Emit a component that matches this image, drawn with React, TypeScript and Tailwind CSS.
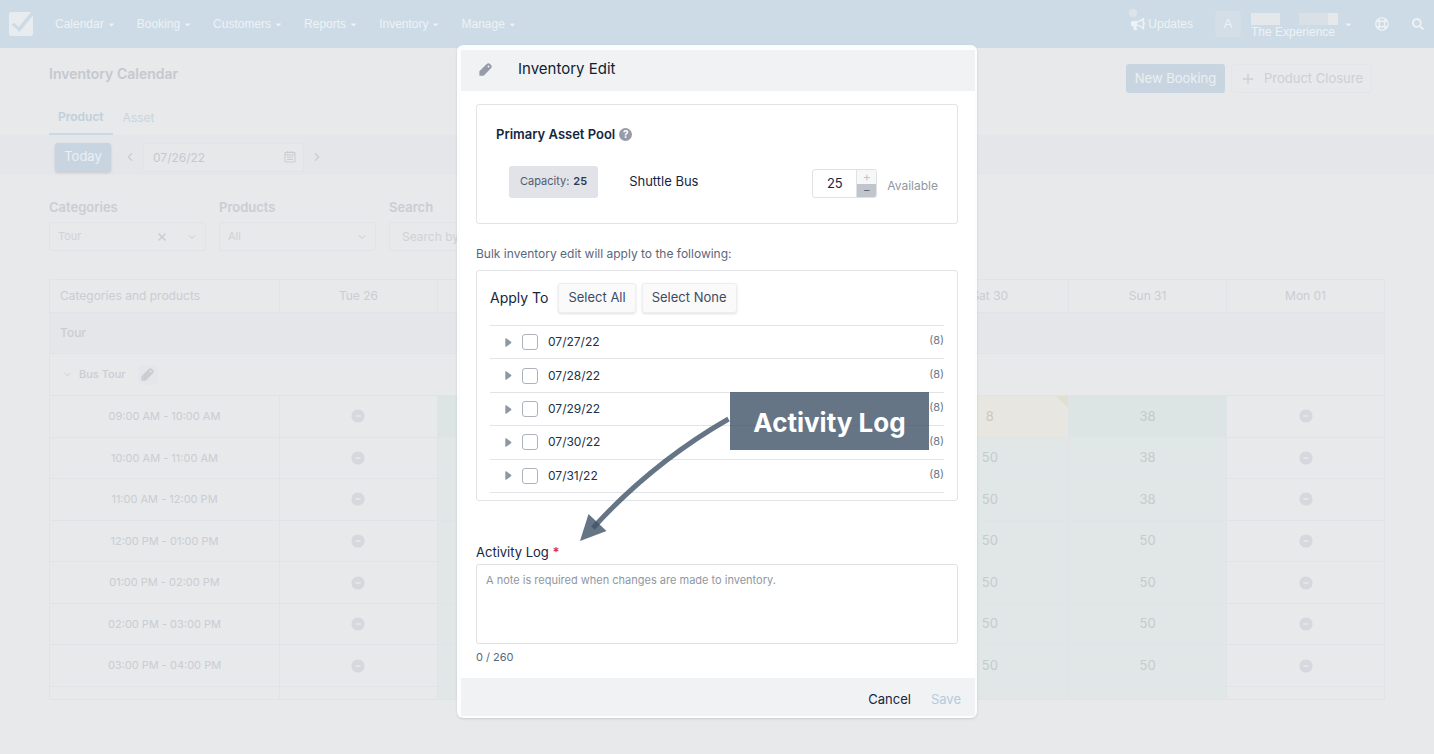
import { ReactNode, SVGProps } from 'react'
import { ChevronDown, ChevronLeft, ChevronRight, Plus, X } from 'lucide-react'
import { FaBullhorn, FaCaretDown, FaRegLifeRing, FaSearch } from 'react-icons/fa'
import clsx from 'clsx'

const NAV = ['Calendar', 'Booking', 'Customers', 'Reports', 'Inventory', 'Manage']

const DAYS = ['Tue 26', 'Wed 27', 'Thu 28', 'Fri 29', 'Sat 30', 'Sun 31', 'Mon 01']

const SLOTS = [
  { time: '09:00 AM - 10:00 AM', cells: [null, 50, 50, 50, 8, 38, null] },
  { time: '10:00 AM - 11:00 AM', cells: [null, 50, 50, 50, 50, 38, null] },
  { time: '11:00 AM - 12:00 PM', cells: [null, 50, 50, 50, 50, 38, null] },
  { time: '12:00 PM - 01:00 PM', cells: [null, 50, 50, 50, 50, 50, null] },
  { time: '01:00 PM - 02:00 PM', cells: [null, 50, 50, 50, 50, 50, null] },
  { time: '02:00 PM - 03:00 PM', cells: [null, 50, 50, 50, 50, 50, null] },
  { time: '03:00 PM - 04:00 PM', cells: [null, 50, 50, 50, 50, 50, null] },
]

const DATES = ['07/27/22', '07/28/22', '07/29/22', '07/30/22', '07/31/22']

// ── Icons ─────────────────────────────────────────────────────────────────────

function PencilIcon(props: SVGProps<SVGSVGElement>) {
  return (
    <svg viewBox="0 0 14 14" fill="currentColor" aria-hidden="true" {...props}>
      <path
        fillRule="evenodd"
        d="M.4 13.6V9L8.300 1.100a2.600 2.600 0 0 1 3.600 0l1 1a2.600 2.600 0 0 1 0 3.600L5 13.600zM10.300 2.500 9 3.800l1.200 1.200 1.300-1.300z"
      />
    </svg>
  )
}

function CalendarIcon(props: SVGProps<SVGSVGElement>) {
  return (
    <svg viewBox="0 0 12 12" fill="none" stroke="currentColor" aria-hidden="true" {...props}>
      <path d="M1 1.5h10v9.5H1zM1 4h10M3.5 0v2.5M6 0v2.5M8.5 0v2.5M3 6.2h6M3 8.5h6" />
    </svg>
  )
}

function LogoIcon() {
  return (
    <svg viewBox="0 0 24 24" className="size-6" aria-hidden="true">
      <rect width="24" height="24" rx="2.5" fill="#e9ecef" />
      <path d="M2.500 12.500 5.300 10.800l4.300 4.400L22 0h2v3.200L10.500 20z" fill="#cddbe6" />
    </svg>
  )
}

function MinusCircle() {
  return (
    <svg viewBox="0 0 14 14" className="mx-auto size-[14px]" aria-hidden="true">
      <circle cx="7" cy="7" r="6.6" fill="#d5d8dc" />
      <path d="M4.5 7h5" stroke="#e7e9eb" strokeWidth="1.6" />
    </svg>
  )
}

// ── Top bar ───────────────────────────────────────────────────────────────────

function TopBar() {
  return (
    <header className="flex h-12 items-center bg-[#cddbe6] pl-[9px] pr-[10px] font-['Liberation_Sans',Arial,sans-serif] text-xs text-[#eef2f5]">
      <a href="#home" aria-label="Home">
        <LogoIcon />
      </a>
      <nav className="ml-[22px] flex items-center gap-[21px]">
        {NAV.map((item) => (
          <a key={item} href={`#${item.toLowerCase()}`} className="flex items-center gap-[3px]">
            {item}
            <FaCaretDown className="size-[9px]" />
          </a>
        ))}
      </nav>
      <div className="ml-auto flex items-center">
        <a href="#updates" className="relative flex items-center gap-[3px]">
          <span className="absolute -left-0.5 -top-[7px] size-2 rounded-full bg-[#dde3e8]" />
          <FaBullhorn className="size-[14px]" />
          Updates
        </a>
        <span className="ml-[22px] flex size-[26px] items-center justify-center rounded-sm bg-[#d4dee6] text-[13px]">A</span>
        <button type="button" className="ml-[10px] flex items-center gap-[10px]">
          <span className="flex flex-col items-start pt-[3px]">
            <span className="flex h-3 w-[87px] justify-between">
              <span className="w-[29px] bg-[#e4e8eb]" />
              <span className="flex w-[39px]">
                <span className="flex-1 bg-[#d9e1e7]" />
                <span className="w-[10px] bg-[#e6e9ec]" />
              </span>
            </span>
            <span className="leading-[14px]">The Experience</span>
          </span>
          <FaCaretDown className="-ml-1 size-[9px]" />
        </button>
        <button type="button" aria-label="Help" className="ml-[22px]">
          <FaRegLifeRing className="size-[14px]" />
        </button>
        <button type="button" aria-label="Find" className="ml-[23px]">
          <FaSearch className="size-3" />
        </button>
      </div>
    </header>
  )
}

// ── Filters ───────────────────────────────────────────────────────────────────

function Field({ label, id, children }: { label: string; id: string; children: ReactNode }) {
  return (
    <div className="w-[157px]">
      <label htmlFor={id} className="mb-[6px] block text-[13px] font-semibold leading-[18px] text-[#cbcdd2]">
        {label}
      </label>
      {children}
    </div>
  )
}

function SelectField({ label, id, value, clearable }: { label: string; id: string; value: string; clearable?: boolean }) {
  return (
    <Field label={label} id={id}>
      <div className="relative">
        <select
          id={id}
          className="h-[29px] w-full appearance-none rounded-[3px] border border-[#e1e3e6] px-2 text-[11px] text-[#d0d2d6]"
        >
          <option>{value}</option>
        </select>
        <span className="pointer-events-none absolute inset-y-0 right-2 flex items-center gap-[18px] text-[#c9ccd0]">
          {clearable && <X className="size-3" strokeWidth={3} />}
          <ChevronDown className="size-3" />
        </span>
      </div>
    </Field>
  )
}

function PageHeader() {
  return (
    <>
      <div className="flex items-start justify-between pl-[49px] pr-[62px] pt-4">
        <h1 className="text-sm font-semibold leading-[20px] text-[#c5c8cd]">Inventory Calendar</h1>
        <div className="flex gap-1.5 text-[13px]">
          <button type="button" className="h-[29px] w-[99px] rounded-[3px] bg-[#c8d5e1] text-[#ebeff2]">
            New Booking
          </button>
          <button
            type="button"
            className="flex h-[29px] items-center gap-2 rounded-[3px] border border-[#e3e5e8] px-2 text-[#cdcfd4]"
          >
            <Plus className="size-4" />
            Product Closure
          </button>
        </div>
      </div>
      <div className="flex px-[49px] pt-4 text-xs leading-4 text-[#cad5df]">
        <button type="button" className="border-b-2 border-[#c6dae8] px-[9px] pb-2 font-semibold text-[#c1cfdb]">
          Product
        </button>
        <button type="button" className="px-[10px] pb-2">
          Asset
        </button>
      </div>
      <div className="flex h-10 items-center bg-[#e5e6ea] px-[55px] pt-1 text-[13px]">
        <button type="button" className="h-[29px] w-14 rounded-[3px] bg-[#c8d5e1] text-[#ebeff2] shadow-sm">
          Today
        </button>
        <button type="button" aria-label="Previous day" className="ml-3 text-[#c9ccd0]">
          <ChevronLeft className="size-[14px]" />
        </button>
        <div className="relative ml-[6px]">
          <input
            aria-label="Date"
            defaultValue="07/26/22"
            className="h-[29px] w-[161px] rounded-[3px] border border-[#e2e3e6] bg-[#e7e8ea] px-[9px] text-xs text-[#c6c8ce]"
          />
          <CalendarIcon className="absolute right-2 top-2 size-3 text-[#c9ccd0]" />
        </div>
        <button type="button" aria-label="Next day" className="ml-[6px] text-[#c9ccd0]">
          <ChevronRight className="size-[14px]" />
        </button>
      </div>
      <div className="flex gap-[13px] px-[49px] pb-7 pt-[23px]">
        <SelectField label="Categories" id="categories" value="Tour" clearable />
        <SelectField label="Products" id="products" value="All" />
        <Field label="Search" id="search">
          <input
            id="search"
            placeholder="Search by name"
            className="h-[29px] w-full rounded-[3px] border border-[#e1e3e6] px-3 text-xs placeholder:text-[#d0d2d6]"
          />
        </Field>
      </div>
    </>
  )
}

// ── Inventory grid ────────────────────────────────────────────────────────────

function cellTone(value: number | null, first: boolean) {
  if (value === null) return 'text-[#cdd0d4]'
  if (value < 10) return 'bg-[#e7e6e1] text-[#cfc7c3]'
  return first ? 'bg-[#dce5e4] text-[#c0ccc8]' : 'bg-[#e1e6e7] text-[#c4cccc]'
}

function InventoryGrid() {
  return (
    <div className="px-[49px]">
      <table className="h-[421px] w-full table-fixed border-collapse text-[13px] text-[#cacdd1] [&_td]:border [&_td]:border-[#e1e4e6] [&_th]:border [&_th]:border-[#e1e4e6]">
        <thead>
          <tr className="h-[33px] text-xs">
            <th className="w-[230px] px-[10px] text-left font-normal">Categories and products</th>
            {DAYS.map((day) => (
              <th key={day} className="font-normal">
                {day}
              </th>
            ))}
          </tr>
        </thead>
        <tbody>
          <tr className="h-[41px] bg-[#e5e6ea]">
            <td colSpan={8} className="px-[10px] text-xs font-medium">
              Tour
            </td>
          </tr>
          <tr className="h-[42px]">
            <td colSpan={8} className="px-3 text-[11px] font-medium">
              <span className="flex items-center">
                <ChevronDown className="size-[11px]" />
                <span className="ml-[6px]">Bus Tour</span>
                <button
                  type="button"
                  aria-label="Edit Bus Tour"
                  className="ml-3 flex size-5 items-center justify-center rounded bg-[#e4e6ea]"
                >
                  <PencilIcon className="size-[13px]" />
                </button>
              </span>
            </td>
          </tr>
          {SLOTS.map((slot, row) => (
            <tr key={slot.time}>
              <td className="text-center text-[11px]">{slot.time}</td>
              {slot.cells.map((value, i) => (
                <td key={DAYS[i]} className={clsx('relative text-center', cellTone(value, row === 0))}>
                  {value === null ? <MinusCircle /> : value}
                  {value !== null && value < 10 && (
                    <span className="absolute right-0 top-0 size-3 bg-[#e2dfd0] [clip-path:polygon(0_0,100%_0,100%_100%)]" />
                  )}
                </td>
              ))}
            </tr>
          ))}
          <tr className="h-[13px]">
            <td />
            {DAYS.map((day, i) => (
              <td key={day} className={clsx(i > 0 && i < 6 && 'bg-[#e1e6e7]')} />
            ))}
          </tr>
        </tbody>
      </table>
    </div>
  )
}

// ── Modal ─────────────────────────────────────────────────────────────────────

function AssetPool() {
  return (
    <section className="h-[120px] rounded-[3px] border border-[#e1e3e6] px-[19px] pt-5">
      <h3 className="flex items-center gap-1 text-[13px] font-semibold leading-[18px] text-[#142641]">
        Primary Asset Pool
        <span className="flex size-[13px] items-center justify-center rounded-full bg-[#959ca8] text-[10px] font-bold text-white">
          ?
        </span>
      </h3>
      <div className="mt-[22px] flex items-center text-[13px] text-[#142641]">
        <span className="ml-[13px] flex h-8 items-center gap-1 rounded-[3px] bg-[#e1e3e8] px-[11px] text-[11px] text-[#4f5d72]">
          Capacity: <b className="font-semibold text-[#2b3a52]">25</b>
        </span>
        <label htmlFor="shuttle" className="ml-[31px]">
          Shuttle Bus
        </label>
        <div className="ml-auto mt-1 flex items-center">
          <div className="flex h-[29px] w-[65px] overflow-hidden rounded-[3px] border border-[#dfe1e5]">
            <input id="shuttle" defaultValue="25" className="w-[43px] text-center text-[#142641]" />
            <div className="flex flex-1 flex-col border-l border-[#dfe1e5] text-xs leading-3">
              <button type="button" aria-label="Increase" className="flex-1 bg-[#f6f7f8] text-[#bfc4cb]">
                +
              </button>
              <button type="button" aria-label="Decrease" className="flex-1 bg-[#c1c6cc] text-[#5d697a]">
                −
              </button>
            </div>
          </div>
          <span className="ml-[10px] mt-1 text-xs text-[#9097a2]">Available</span>
        </div>
      </div>
    </section>
  )
}

function ApplyTo() {
  return (
    <section className="rounded-[3px] border border-[#e1e3e6] px-[13px] pb-[7px] pt-3">
      <div className="flex items-center gap-[6px] pb-3 text-[13px]">
        <h3 className="mr-1 text-sm text-[#142641]">Apply To</h3>
        {['Select All', 'Select None'].map((label) => (
          <button
            key={label}
            type="button"
            className="h-[30px] rounded-[3px] border border-[#eceef0] bg-[#fafafb] px-[9px] text-[#3d4c62] shadow-sm"
          >
            {label}
          </button>
        ))}
      </div>
      <ul className="flex h-[168px] flex-col border-t border-[#e1e3e6]">
        {DATES.map((date) => (
          <li key={date} className="flex flex-1 items-center border-b border-[#e1e3e6]">
            <button type="button" aria-label={`Expand ${date}`} className="ml-[15px] text-[#8f97a4]">
              <svg viewBox="0 0 7 9" className="h-[9px] w-[7px]" fill="currentColor" aria-hidden="true">
                <path d="M.3.800Q.3 0 1.200.3L6 3.700q.9.800 0 1.600L1.200 8.700Q.3 9 .3 8.200z" />
              </svg>
            </button>
            <label className="ml-[10px] flex items-center gap-[10px] text-xs text-[#22314a]">
              <input type="checkbox" className="size-4 appearance-none rounded-[3px] border border-[#adb3bc] bg-white" />
              {date}
            </label>
            <span className="mb-[3px] ml-auto text-[11px] text-[#6c7686]">(8)</span>
          </li>
        ))}
      </ul>
    </section>
  )
}

function Callout() {
  return (
    <div className="pointer-events-none absolute left-[123px] top-[347px]">
      <div className="ml-[150px] flex h-[58px] w-[199px] items-center justify-center bg-[#405268]/80 pt-0.5 text-[26px] font-bold text-white">
        Activity Log
      </div>
      <svg viewBox="580 412 150 130" className="-mt-[38px] h-[130px] w-[150px]" aria-hidden="true">
        <path d="M728.5 419Q652 463 593 528" fill="none" stroke="#405268" strokeOpacity=".8" strokeWidth="5" />
        <path d="M580 541 588.5 514 606.5 531z" fill="#405268" fillOpacity=".8" />
      </svg>
    </div>
  )
}

function InventoryEditModal() {
  return (
    <div className="absolute inset-x-0 top-0 flex justify-center pt-[45px]">
      <div
        role="dialog"
        aria-labelledby="modal-title"
        className="relative w-[520px] rounded-md bg-[#fcfdfd] pb-[2px] pl-1 pr-[2px] pt-[5px] shadow-sm"
      >
        <header className="flex h-[41px] items-center bg-[#f1f2f4] pb-[3px] pl-[18px]">
          <PencilIcon className="size-[13px] text-[#959ca8]" />
          <h2 id="modal-title" className="ml-[26px] text-[15px] text-[#101d33]">
            Inventory Edit
          </h2>
        </header>
        <div className="bg-white pb-[12px] pl-[15px] pr-[17px] pt-[13px]">
          <AssetPool />
          <p className="pb-[7px] pt-[21px] text-xs leading-[18px] text-[#5b677b]">
            Bulk inventory edit will apply to the following:
          </p>
          <ApplyTo />
          <label htmlFor="log" className="mb-[3px] mt-[42px] block text-[13px] leading-[18px] text-[#142641]">
            Activity Log <span className="font-semibold text-[#d8302f]">*</span>
          </label>
          <textarea
            id="log"
            placeholder="A note is required when changes are made to inventory."
            className="block h-20 w-full resize-none rounded-[3px] border border-[#dfe1e5] px-[9px] py-[7px] text-[11px] placeholder:text-[#9097a2]"
          />
          <p className="mt-[5px] text-[11px] leading-[17px] text-[#5b677b]">0 / 260</p>
        </div>
        <footer className="flex h-[38px] items-center justify-end gap-5 bg-[#f1f2f4] pr-[14px] pt-[6px] text-[13px]">
          <button type="button" className="text-[#142641]">
            Cancel
          </button>
          <button type="button" disabled className="text-[#b3cae0]">
            Save
          </button>
        </footer>
        <Callout />
      </div>
    </div>
  )
}

export default function App() {
  return (
    <div className="relative min-h-screen bg-[#e7e9eb] font-['Inter',sans-serif]">
      <TopBar />
      <PageHeader />
      <InventoryGrid />
      <InventoryEditModal />
    </div>
  )
}
